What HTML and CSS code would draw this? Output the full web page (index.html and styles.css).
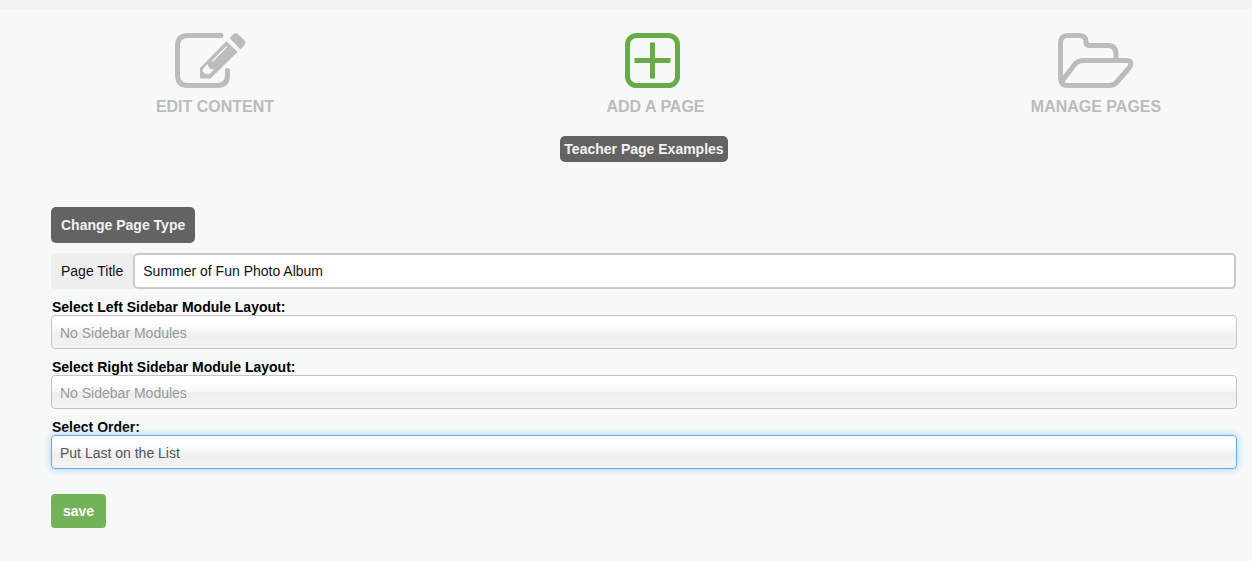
FILE: index.html
```html
<!DOCTYPE html>
<html lang="en">
<head>
    <meta charset="UTF-8">
    <meta name="viewport" content="width=device-width, initial-scale=1.0">
    <title>Add a Page</title>
    <link rel="stylesheet" href="styles.css">
</head>
<body>
    <nav class="page-nav">
        <a href="#" class="nav-item">
            <svg class="nav-icon" viewBox="0 0 80 55">
                <path d="M46 2.500H13Q2.500 2.500 2.500 13V42Q2.500 52.500 13 52.500H42Q52.500 52.500 52.500 42V37.500" fill="none" stroke="currentColor" stroke-width="5" stroke-linecap="round"/>
                <path d="M25 45.500V35L51.500 8L62.500 19L35.500 45.500Z" fill="currentColor"/>
                <path d="M54.500 5L58 1.500Q60.500 -1 63.500 1.500L69 7Q71.500 9.500 69.500 12L65.500 16.500Z" fill="currentColor"/>
                <path d="M37.500 28L52 13.500" fill="none" stroke="#f7f9f8" stroke-width="1.200"/>
                <path d="M28.500 35.500L32.500 31L34.500 35.500L39 36.500L34 41.500L30 40.500L27 38Z" fill="#f7f9f8"/>
            </svg>
            <span>EDIT CONTENT</span>
        </a>
        <a href="#" class="nav-item active">
            <svg class="nav-icon" viewBox="0 0 80 55">
                <rect x="11.500" y="2.500" width="50" height="50" rx="9" fill="none" stroke="currentColor" stroke-width="5"/>
                <path d="M36.500 12V43M21 27.500H52" fill="none" stroke="currentColor" stroke-width="5" stroke-linecap="square" stroke-linejoin="round"/>
            </svg>
            <span>ADD A PAGE</span>
        </a>
        <a href="#" class="nav-item">
            <svg class="nav-icon" viewBox="0 0 80 55">
                <path d="M60 27.500V21Q60 12.500 52 12.500H34Q30 12.500 30 9Q30 2.500 23 2.500H12Q4.500 2.500 4.500 10V45Q4.500 52.500 12 52.500H53Q58 52.500 61 49L73 35Q78 27.500 70 27.500H28Q22 27.500 19 31L6 48" fill="none" stroke="currentColor" stroke-width="5" stroke-linejoin="round"/>
            </svg>
            <span>MANAGE PAGES</span>
        </a>
    </nav>

    <main class="content">
        <div class="examples">
            <a href="#" class="btn btn-small">Teacher Page Examples</a>
        </div>

        <form class="page-form">
            <button type="button" class="btn">Change Page Type</button>

            <div class="title-group">
                <label for="page-title">Page Title</label>
                <input type="text" id="page-title" value="Summer of Fun Photo Album">
            </div>

            <div class="field">
                <label for="left-sidebar">Select Left Sidebar Module Layout:</label>
                <select id="left-sidebar">
                    <option>No Sidebar Modules</option>
                </select>
            </div>
            <div class="field">
                <label for="right-sidebar">Select Right Sidebar Module Layout:</label>
                <select id="right-sidebar">
                    <option>No Sidebar Modules</option>
                </select>
            </div>
            <div class="field">
                <label for="order">Select Order:</label>
                <select id="order" class="selected">
                    <option>Put Last on the List</option>
                </select>
            </div>

            <button type="submit" class="btn btn-save">save</button>
        </form>
    </main>
</body>
</html>
```
FILE: styles.css
```css
* {
    box-sizing: border-box;
}
body {
    margin: 0;
    border-top: 9px solid #f2f2f2;
    background-color: #f7f9f8;
    color: #111;
    font-family: "Liberation Sans", Arial, sans-serif;
    font-size: 14px;
    line-height: 16px;
}
.page-nav {
    display: flex;
    justify-content: space-between;
    padding: 24px 90px 0 149px;
}
.nav-item {
    display: flex;
    flex-direction: column;
    align-items: center;
    gap: 10px;
    width: 132px;
    color: #bbbcbb;
    font-size: 16px;
    font-weight: bold;
    line-height: 18px;
    text-decoration: none;
    white-space: nowrap;
}
.nav-icon {
    width: 80px;
    height: 55px;
    overflow: visible;
}
.nav-item.active .nav-icon {
    color: #67ac48;
}
.content {
    padding: 0 15px 32px 51px;
}
.examples {
    display: flex;
    justify-content: center;
    margin: 20px 0 45px;
}
.btn {
    height: 36px;
    padding: 0 10px;
    border: none;
    border-radius: 5px;
    background-color: #636363;
    color: #f2f2f2;
    font-family: inherit;
    font-size: 14px;
    font-weight: bold;
    line-height: 26px;
    text-decoration: none;
    cursor: pointer;
}
.btn-small {
    height: 26px;
    padding: 0 4px;
}
.page-form {
    display: flex;
    flex-direction: column;
    align-items: flex-start;
}
.title-group {
    display: flex;
    width: 100%;
    height: 36px;
    margin: 10px 0;
    padding-right: 1px;
}
.title-group label {
    padding: 10px;
    border-radius: 4px 0 0 4px;
    background-color: #eee;
}
.title-group input {
    flex: 1;
    min-width: 0;
    padding: 0 8px;
    border: 2px solid #c8caca;
    border-radius: 5px;
    background-color: #fff;
    color: #111;
    font-family: inherit;
    font-size: 14px;
}
.field {
    display: flex;
    flex-direction: column;
    width: 100%;
    margin-bottom: 10px;
}
.field label {
    padding-left: 1px;
    color: #000;
    font-weight: bold;
}
.field select {
    appearance: none;
    width: 100%;
    height: 34px;
    padding: 2px 8px 0;
    border: 1px solid #c4c6c6;
    border-radius: 4px;
    background: linear-gradient(#fff 20%, #f6f6f6 50%, #eee 52%, #f4f4f4);
    color: #999;
    font-family: inherit;
    font-size: 14px;
}
.field select.selected {
    border-color: #6eaae0;
    box-shadow: 0 0 8px #9fd2fa;
    color: #555;
}
.btn-save {
    height: 34px;
    margin-top: 15px;
    padding: 0 12px;
    border-radius: 4px;
    background-color: #73b257;
    color: #fff;
}
```
